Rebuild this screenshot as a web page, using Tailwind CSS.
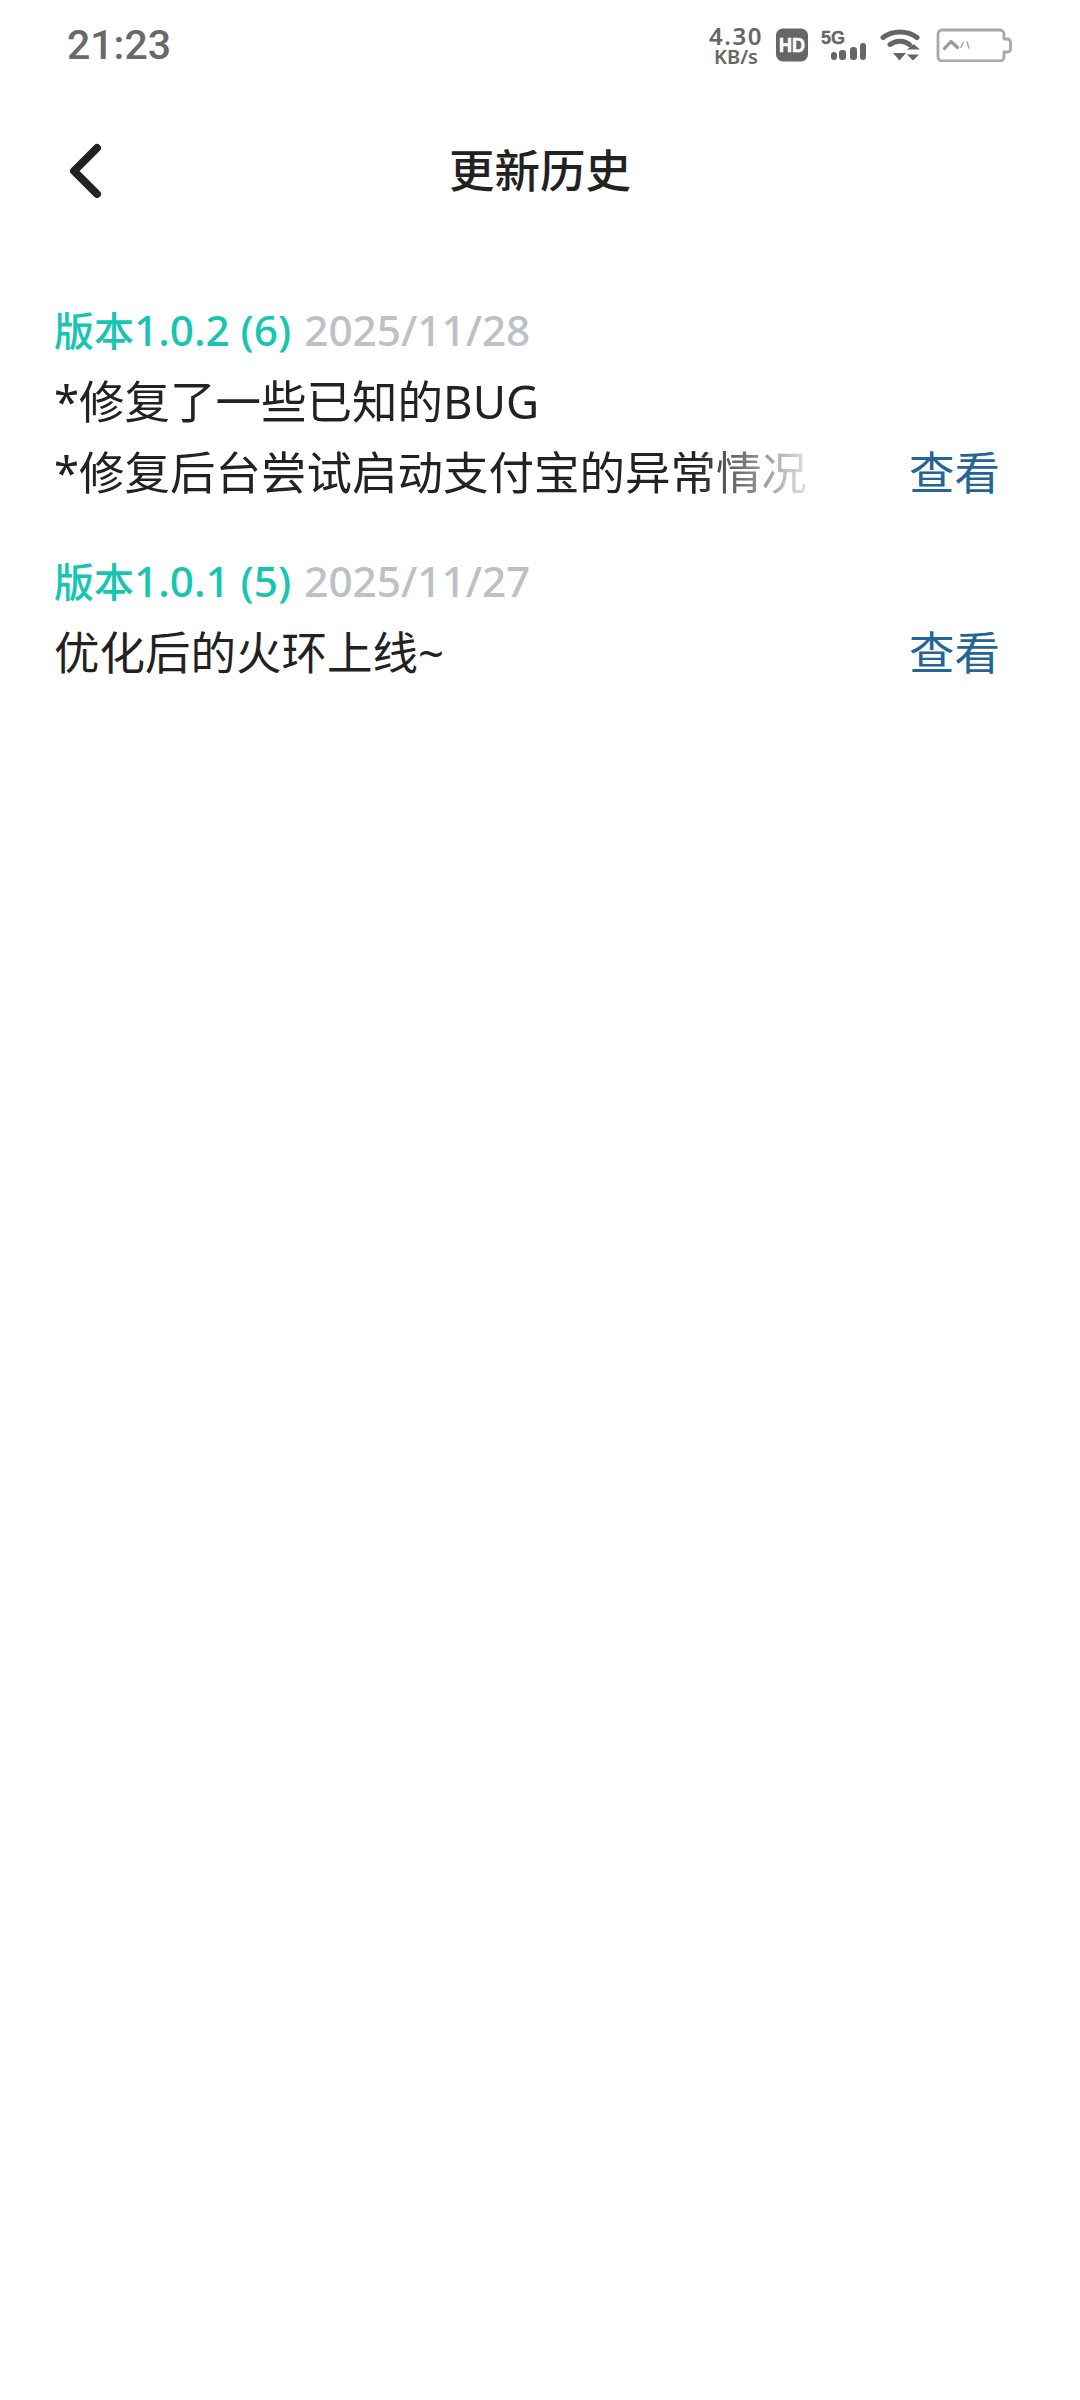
<!DOCTYPE html>
<html lang="zh-CN">
<head>
<meta charset="utf-8">
<script src="https://cdn.jsdelivr.net/npm/@tailwindcss/browser@4"></script>
</head>
<body class="bg-white font-['Noto_Sans','Noto_Sans_CJK_SC',sans-serif]">
<div class="w-[1080px] h-[2400px] bg-white flex flex-col overflow-hidden">
  <div class="h-[90px] pl-[67px] pr-[68px] flex items-center justify-between text-[#696969]">
    <span class="text-[41px] leading-none font-medium font-['Roboto','Noto_Sans',sans-serif]">21:23</span>
    <div class="flex items-center">
      <div class="w-[54px] flex flex-col items-center font-['Noto_Sans',sans-serif] font-semibold text-[#666]">
        <span class="text-[24px] leading-[23px] tracking-[1.5px] whitespace-nowrap">4.30</span>
        <span class="text-[20px] leading-[20px] whitespace-nowrap">KB/s</span>
      </div>
      <svg class="ml-[13px]" width="32" height="34" viewBox="0 0 32 34"><rect width="32" height="33" y="0.5" rx="7" fill="#666"/><text x="16" y="24" text-anchor="middle" font-family="Liberation Sans" font-weight="700" font-size="20" fill="#fff" stroke="#fff" stroke-width="0.6" textLength="26" lengthAdjust="spacingAndGlyphs">HD</text></svg>
      <svg class="ml-[13px]" width="46" height="34" viewBox="0 0 46 34" fill="#666"><text x="0" y="16" font-family="Liberation Sans" font-weight="700" font-size="18" stroke="#666" stroke-width="0.3">5G</text><rect x="10" y="24" width="6" height="8" rx="3"/><rect x="18" y="22" width="7" height="10" rx="3"/><rect x="29" y="19" width="7" height="13" rx="3"/><rect x="39" y="15" width="6" height="17" rx="3"/></svg>
      <svg class="ml-[13px]" width="40" height="34" viewBox="0 0 40 34" fill="none"><path d="M3 9.500C12.500 2 27.500 2 37 9.500" stroke="#666" stroke-width="5" stroke-linecap="round"/><path d="M10 16.500C16 12 24 12 29.500 16.500" stroke="#666" stroke-width="5" stroke-linecap="round"/><path d="M13 25h13l-6.500 7.500z" fill="#666"/><path d="M33 16l6.500 5.500h-13z" fill="#666" transform="translate(0.500 0) scale(1)"/><path d="M33 32.500l-6 -6h12z" fill="#666"/></svg>
      <svg class="ml-[16px]" width="76" height="34" viewBox="0 0 76 34" fill="none"><path d="M6 2h58a4 4 0 0 1 4 4v5h3.500a3 3 0 0 1 3 3v7a3 3 0 0 1-3 3H68v5a4 4 0 0 1-4 4H6a4 4 0 0 1-4-4V6a4 4 0 0 1 4-4z" stroke="#a8a8a8" stroke-width="2.800" stroke-linejoin="round"/><path d="M8.500 20.500l6.500-7 6.500 6" stroke="#9a9a9a" stroke-width="3.200" stroke-linecap="round" stroke-linejoin="round"/><path d="M24.500 20l3-6M31 13.500l2 7" stroke="#aaa" stroke-width="1.500"/></svg>
    </div>
  </div>
  <div class="relative h-[162px] flex items-center justify-center">
    <svg class="absolute left-[66px] top-[50px]" width="40" height="62" viewBox="0 0 40 62" fill="none"><path d="M31 8L8 31l23 23" stroke="#202224" stroke-width="8" stroke-linecap="round" stroke-linejoin="round"/></svg>
    <span class="text-[45.5px] leading-none font-medium text-[#222]">更新历史</span>
  </div>
  <div class="pt-[51px] pl-[54px] pr-[80px] flex flex-col gap-[46px]">
    <section>
      <div class="h-[54px] flex items-baseline text-[42.3px] font-medium leading-[54px] whitespace-nowrap">
        <span class="text-[#16c5b2]"><span class="text-[40px]">版本</span>1.0.2 (6)</span><span class="ml-[13px] text-[#bcc0c7]">2025/11/28</span>
      </div>
      <div class="mt-[9px] flex items-end justify-between text-[45.5px] leading-[71px] text-[#222]">
        <div class="w-[770px] whitespace-nowrap overflow-hidden [mask-image:linear-gradient(to_right,black_83%,transparent_100%)]">*修复了一些已知的BUG<br>*修复后台尝试启动支付宝的异常情况</div>
        <span class="text-[#256596]">查看</span>
      </div>
    </section>
    <section>
      <div class="h-[54px] flex items-baseline text-[42.3px] font-medium leading-[54px] whitespace-nowrap">
        <span class="text-[#16c5b2]"><span class="text-[40px]">版本</span>1.0.1 (5)</span><span class="ml-[13px] text-[#bcc0c7]">2025/11/27</span>
      </div>
      <div class="mt-[9px] flex items-end justify-between text-[45.5px] leading-[71px] text-[#222]">
        <div class="whitespace-nowrap">优化后的火环上线~</div>
        <span class="text-[#256596]">查看</span>
      </div>
    </section>
  </div>
</div>
</body>
</html>
